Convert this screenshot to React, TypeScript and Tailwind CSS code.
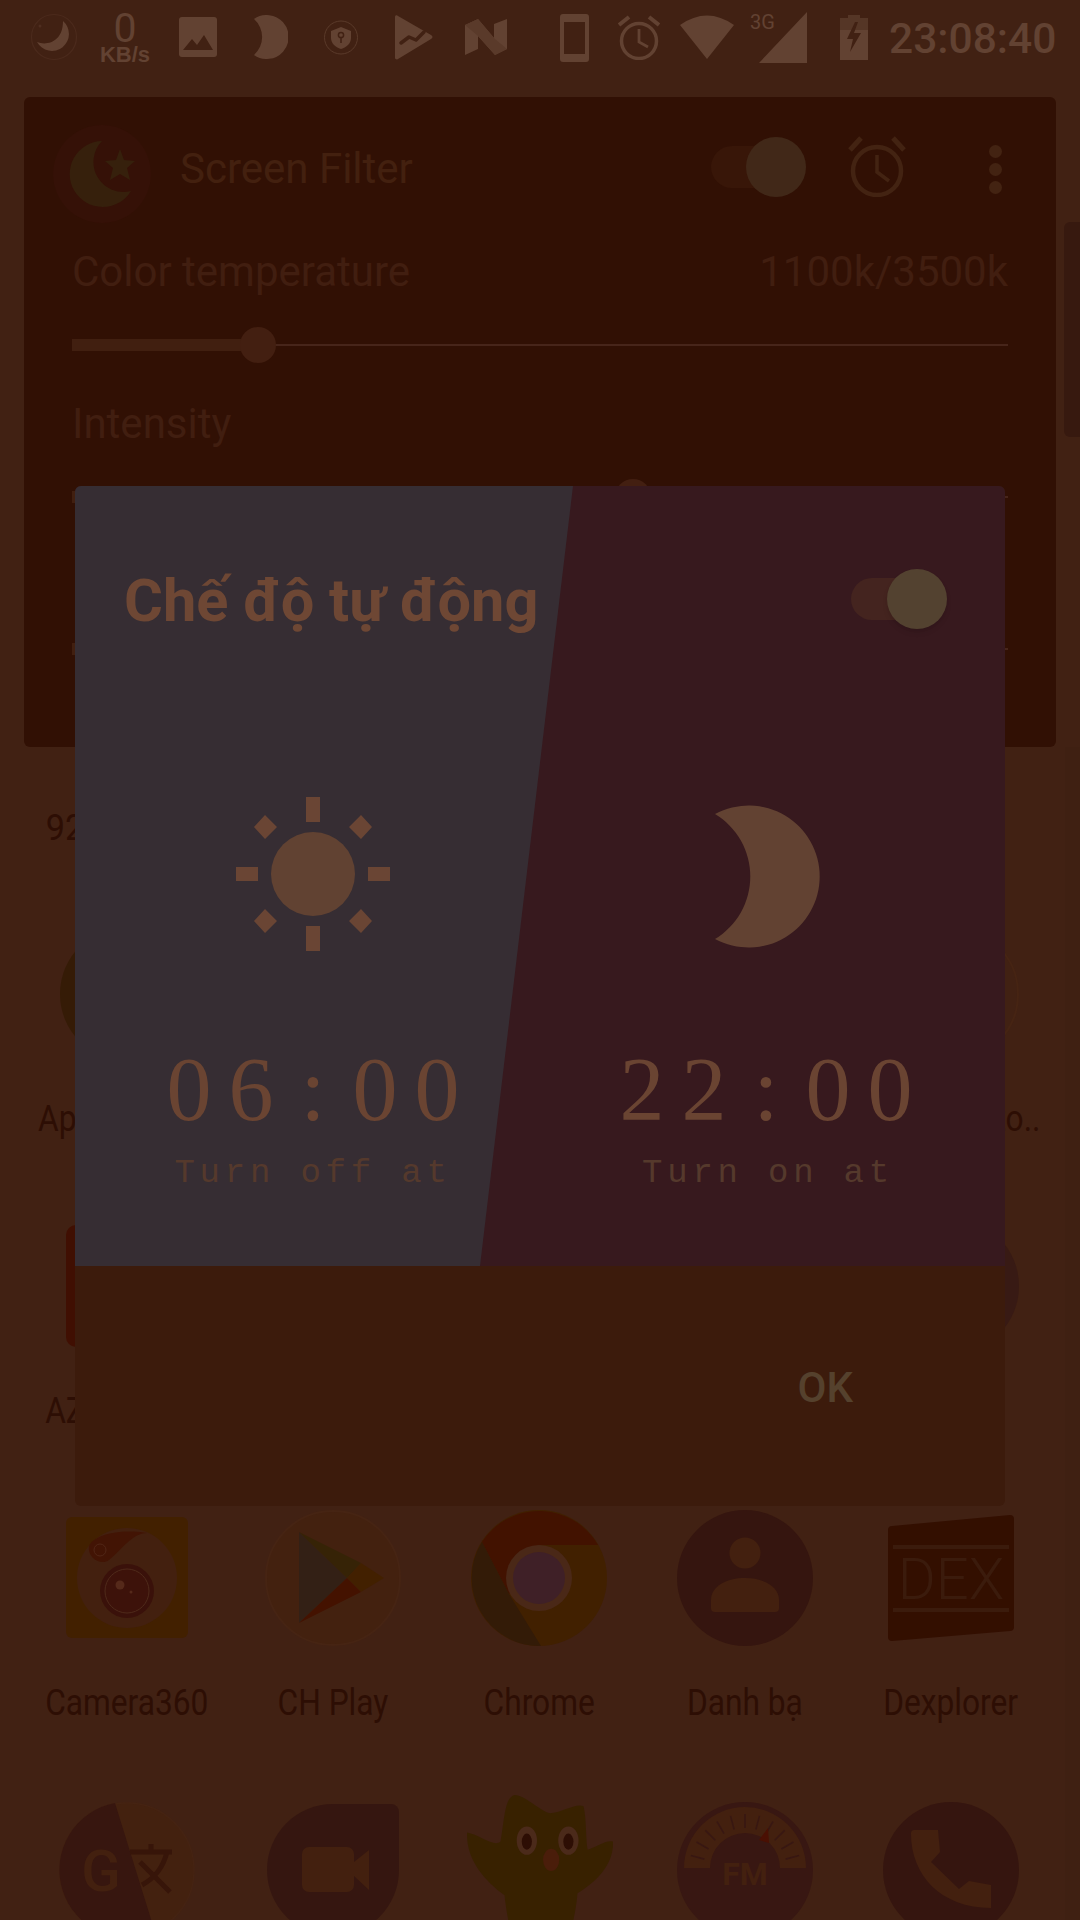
import React from 'react'

const ICON = '#624232'

function StatusBar() {
  return (
    <div className="flex h-[97px] items-start pt-[12px] text-[#624232]">
      {/* moon logo */}
      <svg className="ml-[30px] h-[50px] w-[48px]" viewBox="0 0 48 50">
        <circle cx="24" cy="25" r="22.5" fill="none" stroke="#4b2a1c" strokeWidth="1.2" />
        <path d="M33 9a17 17 0 1 1-26 21c10 4 26 0 26-21z" fill={ICON} />
        <circle cx="10" cy="14" r="1.5" fill="#4f2e20" />
      </svg>
      <div className="ml-[21px] flex w-[52px] flex-col items-center">
        <span className="font-['Roboto',sans-serif] text-[41px] leading-[33px]">0</span>
        <span className="font-['Liberation_Sans',sans-serif] text-[22px] leading-[19px] font-bold">KB/s</span>
      </div>
      <svg className="ml-[28px] mt-[5px] h-[40px] w-[38px]" viewBox="0 0 38 40">
        <rect width="38" height="40" rx="3" fill={ICON} />
        <path d="M4 33l9-11 5 6 7-10 9 15z" fill="#412113" />
      </svg>
      <svg className="ml-[37px] mt-[3px] h-[44px] w-[34px]" viewBox="0 0 34 44">
        <path d="M0 4A22 22 0 1 1 0 40 24 24 0 0 0 0 4z" fill={ICON} />
      </svg>
      <svg className="ml-[36px] mt-[8px] h-[35px] w-[34px]" viewBox="0 0 34 35">
        <circle cx="17" cy="17.5" r="16.5" fill="none" stroke="#5a3a2a" strokeWidth="1" />
        <path d="M17 7l10 4v7c0 5-4 9-10 11-6-2-10-6-10-11v-7z" fill={ICON} />
        <circle cx="17" cy="15" r="2.6" fill="none" stroke="#412113" strokeWidth="1.5" />
        <path d="M17 17v6" stroke="#412113" strokeWidth="1.5" />
      </svg>
      <svg className="ml-[37px] mt-[3px] h-[45px] w-[38px]" viewBox="0 0 38 45">
        <path d="M0 2c0-2 2-2 3-1l33 19c2 1 2 3 0 4L3 44c-1 1-3 0-3-1z" fill={ICON} />
        <path d="M6 28l8-6 7 3 8-8" fill="none" stroke="#412113" strokeWidth="3.5" strokeLinecap="round" strokeLinejoin="round" />
      </svg>
      <svg className="ml-[32px] mt-[7px] h-[36px] w-[42px]" viewBox="0 0 42 36">
        <path d="M0 6l13-6 16 19V5l13-5v30l-12 6L13 17v13L0 36z" fill="#624232" />
        <path d="M0 6l13-6 17 20 12 10-12 6L13 17 0 6z" fill="#5a3a2a" />
      </svg>
      <svg className="ml-[53px] mt-[2px] h-[48px] w-[29px]" viewBox="0 0 29 48">
        <path fillRule="evenodd" d="M3 0h23a3 3 0 0 1 3 3v42a3 3 0 0 1-3 3H3a3 3 0 0 1-3-3V3a3 3 0 0 1 3-3zm1 8v32h21V8z" fill={ICON} />
      </svg>
      <svg className="ml-[29px] mt-[3px] h-[45px] w-[42px]" viewBox="0 0 42 45">
        <circle cx="21" cy="26" r="17.5" fill="none" stroke={ICON} strokeWidth="3.5" />
        <path d="M21 14v13l9 5" fill="none" stroke={ICON} strokeWidth="2.8" />
        <path d="M1 10L11 2M41 10L31 2" stroke={ICON} strokeWidth="4" />
      </svg>
      <svg className="ml-[20px] mt-[3px] h-[44px] w-[54px]" viewBox="0 0 54 44">
        <path d="M0 10Q27-9 54 10L27 44z" fill={ICON} />
      </svg>
      <div className="relative ml-[25px] h-[51px] w-[48px]">
        <svg className="h-[51px] w-[48px]" viewBox="0 0 48 51">
          <path d="M48 0v51H0z" fill={ICON} />
        </svg>
        <span className="absolute left-[-9px] top-[-1px] font-['Roboto',sans-serif] text-[20px] leading-[22px]">3G</span>
      </div>
      <svg className="ml-[33px] mt-[3px] h-[45px] w-[28px]" viewBox="0 0 28 45">
        <path d="M8 0h12v3h8v42H0V3h8z" fill={ICON} />
        <path d="M0 3h28v12H0zM8 0h12v3H8z" fill="#553626" />
        <path d="M15 7L7 24h6l-3 13 11-19h-7l4-11z" fill="#412113" />
      </svg>
      <span className="ml-[21px] mt-[2px] font-['Roboto',sans-serif] text-[42.5px] leading-[50px] font-medium">23:08:40</span>
    </div>
  )
}

function Slider({ fill, thumb }: { fill: number; thumb: number }) {
  return (
    <div className="relative flex h-[36px] items-center">
      <div className="h-[12px] bg-[#411f10]" style={{ width: fill }} />
      <div className="h-[2px] flex-1 bg-[#47251a]" />
      <div className="absolute top-0 h-[36px] w-[36px] rounded-full bg-[#431f11]" style={{ left: thumb }} />
    </div>
  )
}

function FilterPanel() {
  return (
    <div className="mx-[24px] h-[650px] rounded-[6px] bg-[#311004] font-['Roboto',sans-serif]">
      <div className="flex h-[127px] items-end pr-[54px]">
        <svg className="ml-[28px] h-[100px] w-[100px]" viewBox="0 0 100 100">
          <circle cx="50" cy="50" r="49" fill="#351107" />
          <path d="M50 17A33 33 0 1 0 79 67A30 30 0 0 1 50 17z" fill="#36200c" />
          <path d="M68 25l4 11 11 1-8 7 3 12-10-6-10 6 3-12-8-7 11-1z" fill="#36200c" />
        </svg>
        <span className="mb-[31px] ml-[28px] text-[42px] leading-[48px] text-[#43200f]">Screen Filter</span>
        <div className="relative mb-[27px] ml-auto h-[60px] w-[95px]">
          <div className="absolute left-0 top-[9px] h-[42px] w-[70px] rounded-full bg-[#381608]" />
          <div className="absolute right-0 top-0 h-[60px] w-[60px] rounded-full bg-[#412818]" />
        </div>
        <svg className="mb-[27px] ml-[42px] h-[61px] w-[58px]" viewBox="0 0 58 61">
          <circle cx="29" cy="35" r="24" fill="none" stroke="#432312" strokeWidth="4.5" />
          <path d="M29 19v17l12 9" fill="none" stroke="#432312" strokeWidth="3.5" />
          <path d="M2 14L13 2M56 14L45 2" stroke="#432312" strokeWidth="5" />
        </svg>
        <div className="mb-[30px] ml-[83px] flex flex-col gap-[5px]">
          <div className="h-[13px] w-[13px] rounded-full bg-[#432312]" />
          <div className="h-[13px] w-[13px] rounded-full bg-[#432312]" />
          <div className="h-[13px] w-[13px] rounded-full bg-[#432312]" />
        </div>
      </div>
      <div className="px-[48px]">
        <div className="mt-[24px] flex justify-between text-[42px] leading-[48px] text-[#411e10]">
          <span>Color temperature</span>
          <span>1100k/3500k</span>
        </div>
        <div className="mt-[31px]">
          <Slider fill={186} thumb={168} />
        </div>
        <div className="mt-[37px] text-[42px] leading-[48px] text-[#411e10]">Intensity</div>
        <div className="mt-[31px]">
          <Slider fill={540} thumb={543} />
        </div>
        <div className="mt-[116px]">
          <Slider fill={300} thumb={700} />
        </div>
      </div>
    </div>
  )
}

function AppCell({ label, children }: { label?: string; children?: React.ReactNode }) {
  return (
    <div className="flex h-[292px] flex-col items-center">
      <div className="flex h-[140px] w-[140px] shrink-0 items-center justify-center">{children}</div>
      {label && (
        <span className="mt-[35px] scale-x-[0.88] whitespace-nowrap font-['Roboto',sans-serif] text-[36px] leading-[40px] text-[#2d0e04]">
          {label}
        </span>
      )}
    </div>
  )
}

function FmIcon() {
  const ticks = [-165, -150, -135, -120, -105, -90, -75, -60, -45, -30, -15]
  return (
    <svg className="h-[140px] w-[140px]" viewBox="0 0 140 140">
      <circle cx="70" cy="70" r="68" fill="#381712" />
      <path d="M9 68A61 61 0 0 1 131 68H105A35 35 0 0 0 35 68z" fill="#43200f" />
      {ticks.map((a) => {
        const r = (a * Math.PI) / 180
        return (
          <line
            key={a}
            x1={70 + 42 * Math.cos(r)}
            y1={70 + 42 * Math.sin(r)}
            x2={70 + 56 * Math.cos(r)}
            y2={70 + 56 * Math.sin(r)}
            stroke="#381712"
            strokeWidth="1.6"
          />
        )
      })}
      <path d="M93 28L84 40L94 43z" fill="#4a1003" />
      <text x="70" y="85" textAnchor="middle" fontFamily="Roboto, sans-serif" fontWeight="700" fontSize="32" fill="#43200f">FM</text>
    </svg>
  )
}

function HomeGrid() {
  return (
    <div className="mt-[61px] grid grid-cols-5 pl-[24px] pr-[26px]">
      <div className="col-span-5 mb-[76px] origin-left scale-x-[0.95] pl-[23px] font-['Roboto',sans-serif] text-[36px] leading-[40px] text-[#2d0e04]">92</div>

      <AppCell label="Apk Extract.."><div className="h-[134px] w-[134px] rounded-full bg-[#351b06]" /></AppCell>
      <AppCell />
      <AppCell />
      <AppCell />
      <AppCell label="Edits Photo..">
        <div className="h-[136px] w-[136px] rounded-full border-2 border-[#462413]" />
      </AppCell>

      <AppCell label="AZ Record..">
        <div className="h-[122px] w-[122px] rounded-[10px] bg-[#400f02]" />
      </AppCell>
      <AppCell />
      <AppCell />
      <AppCell />
      <AppCell>
        <div className="h-[136px] w-[136px] rounded-full bg-[#381a14]" />
      </AppCell>

      <AppCell label="Camera360">
        <svg className="h-[140px] w-[140px]" viewBox="0 0 140 140">
          <rect x="9" y="9" width="122" height="121" rx="6" fill="#422000" />
          <circle cx="70" cy="70" r="50" fill="#43200f" />
          <path d="M32 38C36 28 60 20 90 25C75 25 65 42 52 52C44 58 30 50 32 38z" fill="#421404" />
          <circle cx="43" cy="42" r="6" fill="none" stroke="#512616" strokeWidth="1" />
          <circle cx="70" cy="83" r="27" fill="#3a110a" />
          <circle cx="70" cy="83" r="22" fill="#3d120a" stroke="#4f2a1a" strokeWidth="1" />
          <circle cx="63" cy="77" r="4.5" fill="#55291a" />
          <circle cx="74" cy="84" r="1.5" fill="#55291a" />
        </svg>
      </AppCell>
      <AppCell label="CH Play">
        <svg className="h-[140px] w-[140px]" viewBox="0 0 140 140">
          <circle cx="70" cy="70" r="67" fill="#43210f" stroke="#462413" strokeWidth="2" />
          <path d="M36 24L84 70L36 115z" fill="#332015" />
          <path d="M36 24L98 55L84 70z" fill="#362306" />
          <path d="M98 55L121 70L98 84L84 70z" fill="#422000" />
          <path d="M36 115L84 70L98 84z" fill="#441200" />
        </svg>
      </AppCell>
      <AppCell label="Chrome">
        <svg className="h-[140px] w-[140px]" viewBox="0 0 140 140">
          <circle cx="70" cy="70" r="68" fill="#412000" />
          <path d="M13 34A68 68 0 0 1 129 37H70L40 86z" fill="#421200" />
          <path d="M13 34L40 86L72 138A68 68 0 0 1 13 34z" fill="#331b07" />
          <circle cx="70" cy="70" r="33" fill="#4a2817" />
          <circle cx="70" cy="70" r="26" fill="#3f2027" />
        </svg>
      </AppCell>
      <AppCell label="Danh bạ">
        <svg className="h-[140px] w-[140px]" viewBox="0 0 140 140">
          <circle cx="70" cy="70" r="68" fill="#35150f" />
          <circle cx="70" cy="45" r="15.5" fill="#43200f" />
          <path d="M36 100V92C36 78 52 70 70 70C88 70 104 78 104 92V100a4 4 0 0 1-4 4H40a4 4 0 0 1-4-4z" fill="#43200f" />
        </svg>
      </AppCell>
      <AppCell label="Dexplorer">
        <svg className="h-[140px] w-[140px]" viewBox="0 0 140 140">
          <path d="M11 18L129 7a4 4 0 0 1 4 4V119a4 4 0 0 1-4 4L11 133a4 4 0 0 1-4-4V22a4 4 0 0 1 4-4z" fill="#330f00" />
          <path d="M12 37h116v4H12zM12 100h116v4H12z" fill="#3b1b0c" />
          <text x="70" y="91" textAnchor="middle" fontFamily="Roboto, sans-serif" fontWeight="300" fontSize="58" fill="#3b1b0c">DEX</text>
        </svg>
      </AppCell>

      <AppCell>
        <svg className="h-[140px] w-[140px]" viewBox="0 0 140 140">
          <circle cx="70" cy="70" r="67" fill="#43210f" stroke="#452312" strokeWidth="1.5" />
          <path d="M58 3A68 68 0 1 0 98 132z" fill="#37160f" />
          <text x="44" y="91" textAnchor="middle" fontFamily="Roboto, sans-serif" fontWeight="500" fontSize="58" fill="#43200f">G</text>
          <path d="M73 52H115M94 44V52M110 52C106 68 98 78 85 85M83 62L113 92" fill="none" stroke="#371509" strokeWidth="5" />
        </svg>
      </AppCell>
      <AppCell>
        <svg className="h-[140px] w-[140px]" viewBox="0 0 140 140">
          <path d="M70 4H128a8 8 0 0 1 8 8V70A66 66 0 1 1 70 4z" fill="#351610" />
          <rect x="39" y="47" width="52" height="45" rx="7" fill="#43200f" />
          <path d="M91 62L106 50V90L91 76z" fill="#43200f" />
        </svg>
      </AppCell>
      <AppCell>
        <svg className="h-[164px] w-[150px] shrink-0" viewBox="0 0 148 160">
          <path d="M3 43C15 45 30 58 36 52C40 30 40 8 50 6C60 6 75 22 85 24C95 24 110 14 118 17C121 30 120 50 122 60C130 58 140 50 147 52C148 75 130 92 112 103C110 125 105 145 98 160H50C46 140 42 125 40 105C20 90 2 70 3 43z" fill="#382100" />
          <ellipse cx="62" cy="51" rx="10" ry="14" fill="#4b2a1a" />
          <ellipse cx="103" cy="51" rx="10" ry="14" fill="#4b2a1a" />
          <ellipse cx="62" cy="52" rx="5" ry="8" fill="#2d0e04" />
          <ellipse cx="103" cy="52" rx="5" ry="8" fill="#2d0e04" />
          <ellipse cx="86" cy="70" rx="8" ry="11" fill="#4a1d0a" />
        </svg>
      </AppCell>
      <AppCell><FmIcon /></AppCell>
      <AppCell>
        <svg className="h-[140px] w-[140px]" viewBox="0 0 140 140">
          <circle cx="70" cy="70" r="68" fill="#35150f" />
          <path d="M30 34C30 31 31 30 34 30H57L59 52L50 62L78 89L88 81L110 85V108C60 108 30 75 30 34z" fill="#43200f" />
        </svg>
      </AppCell>
    </div>
  )
}

function AutoDialog() {
  return (
    <div className="absolute left-[75px] top-[486px] flex h-[1020px] w-[930px] flex-col overflow-hidden rounded-[6px] bg-[#3c1b0c]">
      <div className="relative flex h-[780px] flex-col bg-[#37191e]">
        <div className="absolute inset-0 bg-[#362d33] [clip-path:polygon(0_0,498px_0,405px_100%,0_100%)]" />
        <div className="relative flex h-[228px] items-start justify-between pl-[49px] pr-[58px] font-['Roboto',sans-serif]">
          <h1 className="mt-[82px] text-[59.5px] leading-[66px] font-bold text-[#6e4734]">Chế độ tự động</h1>
          <div className="relative mt-[83px] h-[60px] w-[96px]">
            <div className="absolute left-0 top-[9px] h-[42px] w-[72px] rounded-full bg-[#44241f]" />
            <div className="absolute right-0 top-0 h-[60px] w-[60px] rounded-full bg-[#534230] shadow-md" />
          </div>
        </div>
        <div className="relative flex flex-1">
          <div className="flex w-[476px] flex-col items-center">
            <svg className="mt-[83px] h-[154px] w-[154px]" viewBox="0 0 154 154">
              <circle cx="77" cy="77" r="42" fill="#614232" />
              <path d="M70 0h14v25H70zM70 129h14v25H70zM0 70h22v14H0zM132 70h22v14h-22z" fill="#6a4534" />
              <path d="M29 18l12 12-12 12-11-12zM125 18l11 12-11 12-12-12zM29 112l12 12-12 12-11-12zM125 112l11 12-11 12-12-12z" fill="#6a4534" />
            </svg>
            <span className="mt-[94px] pl-[17px] font-['Liberation_Serif',serif] text-[90px] leading-[90px] tracking-[17px] text-[#6a4432]">
              06<span className="mx-[10px]">:</span>00
            </span>
            <span className="mt-[18px] font-['Liberation_Mono',monospace] text-[34px] leading-[40px] tracking-[4.8px] text-[#55392c]">Turn off at</span>
          </div>
          <div className="flex w-[434px] flex-col items-center">
            <svg className="mt-[93px] h-[139px] w-[106px] overflow-visible" viewBox="0 0 106 139">
              <path d="M0 7A71 71 0 1 1 0 132A73 73 0 0 0 0 7z" fill="#624232" />
            </svg>
            <span className="mt-[99px] pl-[13px] font-['Liberation_Serif',serif] text-[90px] leading-[90px] tracking-[17px] text-[#6a4432]">
              22<span className="mx-[10px]">:</span>00
            </span>
            <span className="mt-[18px] font-['Liberation_Mono',monospace] text-[34px] leading-[40px] tracking-[4.8px] text-[#55392c]">Turn on at</span>
          </div>
        </div>
      </div>
      <div className="flex flex-1 justify-end pr-[152px] pt-[98px] font-['Roboto',sans-serif]">
        <span className="text-[42px] leading-[48px] font-medium text-[#55412d]">OK</span>
      </div>
    </div>
  )
}

export default function App() {
  return (
    <div className="relative h-[1920px] w-[1080px] overflow-hidden bg-[#412113]">
      <StatusBar />
      <FilterPanel />
      <HomeGrid />
      {/* scrollbar of the panel list */}
      <div className="absolute right-0 top-[222px] h-[215px] w-[16px] rounded-l-[6px] bg-[#37190f]" />
      <div className="absolute bottom-0 right-0 top-[747px] w-[15px] bg-[#3f2012]" />
      <AutoDialog />
    </div>
  )
}
